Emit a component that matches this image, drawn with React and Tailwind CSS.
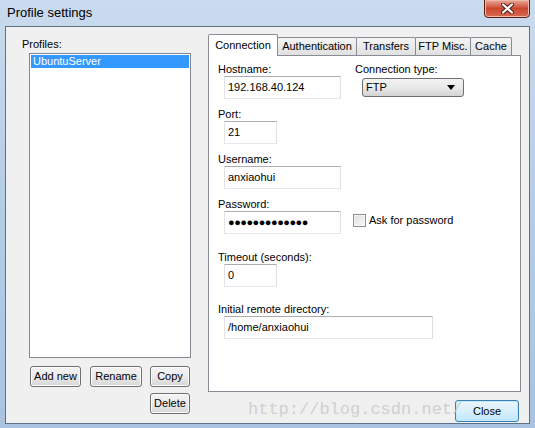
import React from "react";

function TextBox({ className, children }) {
  return (
    <div
      className={`h-[23px] ml-[6px] border border-[#abadb3] border-b-[#e3e9ef] border-l-[#e2e3ea] border-r-[#dbdfe6] bg-white pl-[3px] flex items-center text-[11px] text-black ${className}`}
    >
      {children}
    </div>
  );
}

function Label({ className = "", children }) {
  return <div className={`h-[13px] leading-[13px] text-[11px] text-black ${className}`}>{children}</div>;
}

function Button({ className = "", children }) {
  return (
    <div
      className={`h-[21px] rounded-[3px] border border-[#707070] bg-linear-to-b from-[#f4f4f4] via-[#ebebeb] to-[#d6d6d6] flex items-center justify-center text-[11px] text-black shadow-[inset_0_0_0_1px_#fcfcfc] ${className}`}
    >
      {children}
    </div>
  );
}

const tabs = [
  { name: "Authentication", w: "w-[80px]" },
  { name: "Transfers", w: "w-[60px]" },
  { name: "FTP Misc.", w: "w-[56px]" },
  { name: "Cache", w: "w-[42px]" },
];

export default function App() {
  return (
    <div className="relative w-[535px] h-[428px] overflow-hidden flex flex-col bg-linear-to-b from-[#c9dbee] via-[#b4cce6] to-[#a9c3e0] font-['Liberation_Sans',Arial,sans-serif]">
      {/* title bar */}
      <div className="h-[26px] flex items-start justify-between pl-[7px] pr-[5px]">
        <div className="mt-[3px] text-[13px] text-black">Profile settings</div>
        <div className="w-[46px] h-[19px] -mt-px rounded-b-[4px] border border-[#5c1e14] bg-linear-to-b from-[#e9a99a] via-[#c9472f] to-[#d86a4f] flex items-center justify-center shadow-[inset_0_0_0_1px_#f0b8a8]">
          <svg width="13" height="11" viewBox="0 0 13 11">
            <path d="M2 1.5 L11 9.5 M11 1.5 L2 9.5" stroke="#4a1a12" strokeWidth="4" strokeLinecap="round" />
            <path d="M2 1.5 L11 9.5 M11 1.5 L2 9.5" stroke="#ffffff" strokeWidth="2.2" strokeLinecap="round" />
          </svg>
        </div>
      </div>

      {/* client area */}
      <div className="mx-[5px] h-[398px] border border-[#5d7189] bg-[#f0f0f0] flex">
        {/* profiles column */}
        <div className="w-[202px] pl-[16px] flex flex-col">
          <div className="mt-[8px] h-[18px] leading-[18px] text-[11px] text-black">Profiles:</div>
          <div className="ml-[7px] w-[162px] h-[305px] border border-[#828790] bg-white p-px">
            <div className="h-[13px] bg-[#3399ff] text-white text-[11px] leading-[13px] pl-[2px]">UbuntuServer</div>
          </div>
          <div className="flex ml-[8px] mt-[8px]">
            <Button className="w-[51px]">Add new</Button>
            <Button className="w-[52px] ml-[9px]">Rename</Button>
            <Button className="w-[40px] ml-[8px]">Copy</Button>
          </div>
          <div className="flex ml-[128px] mt-[6px]">
            <Button className="w-[40px]">Delete</Button>
          </div>
        </div>

        {/* tabs column */}
        <div className="flex flex-col mt-[7px]">
          <div className="flex items-end h-[21px]">
            <div className="w-[70px] h-[22px] -mb-px relative z-10 border border-b-0 border-[#898c95] bg-white flex items-center justify-center text-[11px] text-black rounded-t-[2px]">
              Connection
            </div>
            {tabs.map((t) => (
              <div
                key={t.name}
                className={`${t.w} -ml-px h-[18px] border border-b-0 border-[#898c95] bg-linear-to-b from-[#f5f5f5] to-[#e0e0e0] flex items-center justify-center text-[11px] text-black rounded-t-[2px]`}
              >
                {t.name}
              </div>
            ))}
          </div>
          <div className="w-[313px] h-[337px] border border-[#898c95] bg-white pl-[9px] flex flex-col">
            <div className="flex mt-[7px]">
              <div className="w-[137px]">
                <Label>Hostname:</Label>
                <TextBox className="w-[117px]">192.168.40.124</TextBox>
              </div>
              <div>
                <Label>Connection type:</Label>
                <div className="ml-[7px] mt-[2px] w-[102px] h-[19px] rounded-[3px] border border-[#707070] bg-linear-to-b from-[#f3f3f3] via-[#e9e9e9] to-[#d4d4d4] flex items-center justify-between pl-[3px] pr-[8px] text-[11px] text-black">
                  <span>FTP</span>
                  <svg width="8" height="5" viewBox="0 0 8 5">
                    <path d="M0 0 L8 0 L4 5 Z" fill="#000" />
                  </svg>
                </div>
              </div>
            </div>

            <Label className="mt-[9px]">Port:</Label>
            <TextBox className="w-[53px]">21</TextBox>

            <Label className="mt-[9px]">Username:</Label>
            <TextBox className="w-[117px]">anxiaohui</TextBox>

            <Label className="mt-[9px]">Password:</Label>
            <div className="flex items-start">
              <TextBox className="w-[117px] text-[10px] tracking-[-0.5px]">●●●●●●●●●●●●●</TextBox>
              <div className="ml-[12px] mt-px flex items-center">
                <div className="w-[13px] h-[13px] border border-[#8e8f8f] bg-linear-to-br from-[#dcdcdc] to-[#fbfbfb] shadow-[inset_0_0_0_1px_#f4f4f4]" />
                <span className="ml-[3px] text-[11px] text-black">Ask for password</span>
              </div>
            </div>

            <Label className="mt-[17px]">Timeout (seconds):</Label>
            <TextBox className="w-[53px]">0</TextBox>

            <Label className="mt-[16px]">Initial remote directory:</Label>
            <TextBox className="w-[209px]">/home/anxiaohui</TextBox>
          </div>
          <div className="flex justify-end mt-[8px] mr-[2px]">
            <div className="w-[64px] h-[22px] rounded-[3px] border border-[#3c7fb1] bg-linear-to-b from-[#eaf6fd] via-[#d9f0fc] to-[#bee6fd] shadow-[inset_0_0_0_1px_#c4e8fb] flex items-center justify-center text-[11px] text-black">
              Close
            </div>
          </div>
        </div>
      </div>

      {/* watermark */}
      <div className="absolute left-[248px] top-[399px] pointer-events-none font-['Liberation_Mono',monospace] text-[17px] leading-[22px] text-[#c9c9c9] opacity-80">
        http://blog.csdn.net/
      </div>
    </div>
  );
}
